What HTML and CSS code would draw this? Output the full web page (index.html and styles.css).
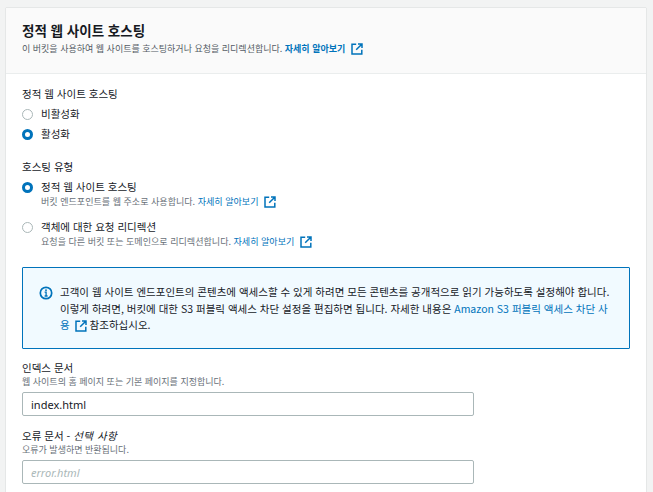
FILE: index.html
```html
<!DOCTYPE html>
<html lang="ko">
<head>
<meta charset="utf-8">
<title>정적 웹 사이트 호스팅</title>
<link rel="stylesheet" href="styles.css">
</head>
<body>
<svg class="defs" width="0" height="0" aria-hidden="true">
  <symbol id="ext" viewBox="0 0 12 12">
    <path d="M5.2 1.2H1v9.8h9.8V6.8" fill="none" stroke="currentColor" stroke-width="1.5"/>
    <path d="M7 1h4v4M11 1L5.2 6.8" fill="none" stroke="currentColor" stroke-width="1.5"/>
  </symbol>
</svg>
<main class="card">
  <header class="card-head">
    <h2 class="title">정적 웹 사이트 호스팅</h2>
    <p class="desc">이 버킷을 사용하여 웹 사이트를 호스팅하거나 요청을 리디렉션합니다. <a class="link strong">자세히 알아보기<svg class="ext ext-head"><use href="#ext"/></svg></a></p>
  </header>
  <div class="card-body">
    <section class="group-a">
      <div class="label-plain">정적 웹 사이트 호스팅</div>
      <div class="radio-row first"><span class="radio"></span><span class="radio-text">비활성화</span></div>
      <div class="radio-row second"><span class="radio on"></span><span class="radio-text">활성화</span></div>
    </section>
    <section class="group-b">
      <div class="label-plain">호스팅 유형</div>
      <div class="option one">
        <span class="radio on"></span>
        <div>
          <div class="radio-text">정적 웹 사이트 호스팅</div>
          <div class="hint">버킷 엔드포인트를 웹 주소로 사용합니다. <a class="link">자세히 알아보기<svg class="ext"><use href="#ext"/></svg></a></div>
        </div>
      </div>
      <div class="option two">
        <span class="radio"></span>
        <div>
          <div class="radio-text">객체에 대한 요청 리디렉션</div>
          <div class="hint">요청을 다른 버킷 또는 도메인으로 리디렉션합니다. <a class="link">자세히 알아보기<svg class="ext"><use href="#ext"/></svg></a></div>
        </div>
      </div>
    </section>
    <aside class="notice">
      <svg class="info" viewBox="0 0 14 14" aria-hidden="true">
        <circle cx="7" cy="7" r="5.7" fill="none" stroke="#0073bb" stroke-width="1.7"/>
        <rect x="6.2" y="3.4" width="1.6" height="1.7" fill="#0073bb"/>
        <path d="M5.6 6.2H7.1V9.9M5.6 10H8.6" fill="none" stroke="#0073bb" stroke-width="1.3"/>
      </svg>
      <p class="notice-text">고객이 웹 사이트 엔드포인트의 콘텐츠에 액세스할 수 있게 하려면 모든 콘텐츠를 공개적으로 읽기 가능하도록 설정해야 합니다. 이렇게 하려면, 버킷에 대한 S3 퍼블릭 액세스 차단 설정을 편집하면 됩니다. 자세한 내용은 <a class="link">Amazon S3 퍼블릭 액세스 차단 사용<svg class="ext ext-notice"><use href="#ext"/></svg></a> 참조하십시오.</p>
    </aside>
    <section class="field index-field">
      <div class="field-label">인덱스 문서</div>
      <div class="field-hint">웹 사이트의 홈 페이지 또는 기본 페이지를 지정합니다.</div>
      <input class="input" type="text" value="index.html">
    </section>
    <section class="field">
      <div class="field-label">오류 문서 - <i class="optional">선택 사항</i></div>
      <div class="field-hint">오류가 발생하면 반환됩니다.</div>
      <input class="input" type="text" placeholder="error.html">
    </section>
  </div>
</main>
</body>
</html>
```

FILE: styles.css
```css
* { box-sizing: border-box; }
html, body { margin: 0; height: 492px; overflow: hidden; }
body {
  background: #f2f3f3;
  padding: 8px 7px 0 6px;
  font-family: "Noto Sans CJK KR", "Noto Sans", sans-serif;
  color: #16191f;
}
.defs { position: absolute; }
.card {
  background: #fff;
  height: 484px;
  overflow: hidden;
  box-shadow: 0 0 1px rgba(0, 28, 36, .3);
}
.card-head {
  background: #fafafa;
  border-bottom: 1px solid #eaeded;
  height: 66px;
  padding: 12px 16px 0;
}
.title { margin: 0; font-size: 13.5px; line-height: 20px; font-weight: 700; }
.desc { margin: 1px 0 0; font-size: 9px; line-height: 16px; color: #545b64; white-space: nowrap; }
.link { color: #0073bb; }
.strong { font-weight: 700; }
.ext { width: 12px; height: 12px; margin-left: 6px; vertical-align: -2.5px; color: #0073bb; }
.card-body { padding: 12px 16px 0; }
.label-plain { font-size: 10.5px; line-height: 16px; color: #16191f; }
.radio-row { display: flex; align-items: center; gap: 8px; height: 20px; }
.radio-row.first { margin-top: 2px; }
.radio {
  flex: none;
  width: 11px;
  height: 11px;
  border-radius: 50%;
  border: 1px solid #aab7b8;
  background: #fff;
}
.radio.on { border: 3.5px solid #0073bb; }
.radio-text { font-size: 10.5px; line-height: 14px; }
.group-b { margin-top: 15px; }
.option { display: flex; gap: 8px; }
.option .radio { margin-top: 2px; }
.option.one { margin-top: 5px; }
.option.two { margin-top: 11px; }
.hint { font-size: 9.05px; line-height: 15px; color: #687078; white-space: nowrap; }
.notice {
  margin-top: 18px;
  height: 82px;
  border: 1px solid #0073bb;
  border-radius: 1px;
  background: #f1faff;
  display: flex;
  gap: 7px;
  padding: 16px 16px 0;
}
.info { flex: none; width: 14px; height: 14px; margin-top: 2px; }
.notice-text { margin: 0; width: 556px; font-size: 10.5px; line-height: 16.5px; }
.ext-notice { margin: 0 0 0 5px; }
.index-field { margin-top: 12px; }
.field + .field { margin-top: 13px; }
.field-label { font-size: 10.5px; line-height: 14px; }
.optional { letter-spacing: .5px; }
.field-hint { font-size: 9px; line-height: 13px; color: #687078; }
.input {
  display: block;
  width: 452px;
  height: 24px;
  margin-top: 4px;
  border: 1px solid #aab7b8;
  border-radius: 2px;
  background: #fff;
  padding: 0 8px;
  font: 11px "Noto Sans", sans-serif;
  color: #16191f;
}
.input::placeholder { color: #aab7b8; font-style: italic; opacity: 1; }
```
